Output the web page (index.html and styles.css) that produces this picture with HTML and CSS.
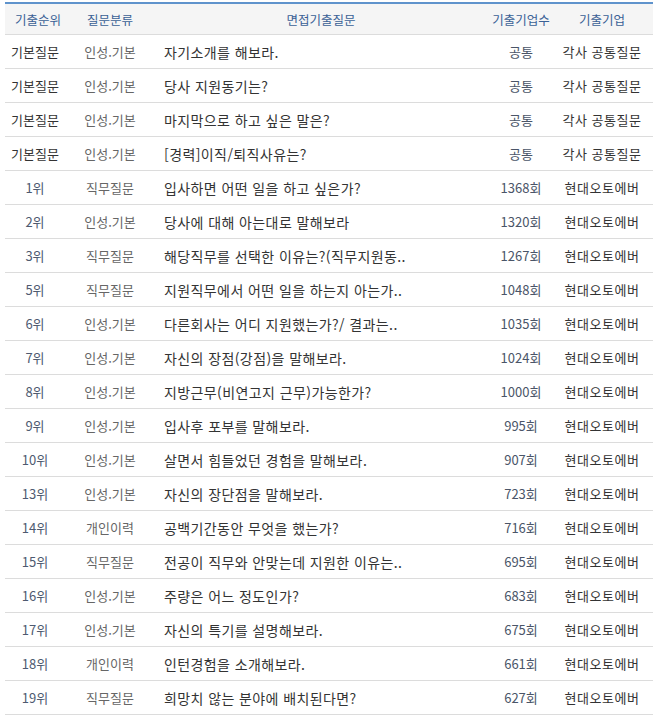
FILE: index.html
```html
<!DOCTYPE html>
<html lang="ko">
<head>
<meta charset="utf-8">
<link rel="stylesheet" href="styles.css">
</head>
<body>
<div class="wrap">
<table class="qtable">
<colgroup>
<col class="c-rank"><col class="c-cat"><col class="c-q"><col class="c-cnt"><col class="c-co">
</colgroup>
<thead>
<tr><th class="h-rank">기출순위</th><th>질문분류</th><th>면접기출질문</th><th>기출기업수</th><th class="co">기출기업</th></tr>
</thead>
<tbody>
<tr><td class="rank basic">기본질문</td><td class="cat">인성.기본</td><td class="q">자기소개를 해보라.</td><td class="cnt">공통</td><td class="co">각사 공통질문</td></tr>
<tr><td class="rank basic">기본질문</td><td class="cat">인성.기본</td><td class="q">당사 지원동기는?</td><td class="cnt">공통</td><td class="co">각사 공통질문</td></tr>
<tr><td class="rank basic">기본질문</td><td class="cat">인성.기본</td><td class="q">마지막으로 하고 싶은 말은?</td><td class="cnt">공통</td><td class="co">각사 공통질문</td></tr>
<tr><td class="rank basic">기본질문</td><td class="cat">인성.기본</td><td class="q">[경력]이직/퇴직사유는?</td><td class="cnt">공통</td><td class="co">각사 공통질문</td></tr>
<tr><td class="rank">1위</td><td class="cat">직무질문</td><td class="q">입사하면 어떤 일을 하고 싶은가?</td><td class="cnt">1368회</td><td class="co">현대오토에버</td></tr>
<tr><td class="rank">2위</td><td class="cat">인성.기본</td><td class="q">당사에 대해 아는대로 말해보라</td><td class="cnt">1320회</td><td class="co">현대오토에버</td></tr>
<tr><td class="rank">3위</td><td class="cat">직무질문</td><td class="q">해당직무를 선택한 이유는?(직무지원동..</td><td class="cnt">1267회</td><td class="co">현대오토에버</td></tr>
<tr><td class="rank">5위</td><td class="cat">직무질문</td><td class="q">지원직무에서 어떤 일을 하는지 아는가..</td><td class="cnt">1048회</td><td class="co">현대오토에버</td></tr>
<tr><td class="rank">6위</td><td class="cat">인성.기본</td><td class="q">다른회사는 어디 지원했는가?/ 결과는..</td><td class="cnt">1035회</td><td class="co">현대오토에버</td></tr>
<tr><td class="rank">7위</td><td class="cat">인성.기본</td><td class="q">자신의 장점(강점)을 말해보라.</td><td class="cnt">1024회</td><td class="co">현대오토에버</td></tr>
<tr><td class="rank">8위</td><td class="cat">인성.기본</td><td class="q">지방근무(비연고지 근무)가능한가?</td><td class="cnt">1000회</td><td class="co">현대오토에버</td></tr>
<tr><td class="rank">9위</td><td class="cat">인성.기본</td><td class="q">입사후 포부를 말해보라.</td><td class="cnt">995회</td><td class="co">현대오토에버</td></tr>
<tr><td class="rank">10위</td><td class="cat">인성.기본</td><td class="q">살면서 힘들었던 경험을 말해보라.</td><td class="cnt">907회</td><td class="co">현대오토에버</td></tr>
<tr><td class="rank">13위</td><td class="cat">인성.기본</td><td class="q">자신의 장단점을 말해보라.</td><td class="cnt">723회</td><td class="co">현대오토에버</td></tr>
<tr><td class="rank">14위</td><td class="cat">개인이력</td><td class="q">공백기간동안 무엇을 했는가?</td><td class="cnt">716회</td><td class="co">현대오토에버</td></tr>
<tr><td class="rank">15위</td><td class="cat">직무질문</td><td class="q">전공이 직무와 안맞는데 지원한 이유는..</td><td class="cnt">695회</td><td class="co">현대오토에버</td></tr>
<tr><td class="rank">16위</td><td class="cat">인성.기본</td><td class="q">주량은 어느 정도인가?</td><td class="cnt">683회</td><td class="co">현대오토에버</td></tr>
<tr><td class="rank">17위</td><td class="cat">인성.기본</td><td class="q">자신의 특기를 설명해보라.</td><td class="cnt">675회</td><td class="co">현대오토에버</td></tr>
<tr><td class="rank">18위</td><td class="cat">개인이력</td><td class="q">인턴경험을 소개해보라.</td><td class="cnt">661회</td><td class="co">현대오토에버</td></tr>
<tr><td class="rank">19위</td><td class="cat">직무질문</td><td class="q">희망치 않는 분야에 배치된다면?</td><td class="cnt">627회</td><td class="co">현대오토에버</td></tr>
</tbody>
</table>
</div>
</body>
</html>
```
FILE: styles.css
```css
html, body {
  margin: 0;
  padding: 0;
  background: #ffffff;
}
body {
  font-family: "Noto Sans CJK KR", "Noto Sans", sans-serif;
  font-size: 13px;
  color: #333;
}
.wrap {
  padding: 2px 0 0 5px;
  overflow: hidden;
}
.qtable {
  width: 648px;
  border-collapse: collapse;
  table-layout: fixed;
  border-top: 2px solid #5f93cc;
}
.c-rank { width: 60px; }
.c-cat { width: 90px; }
.c-q { width: 332px; }
.c-cnt { width: 68px; }
.c-co { width: 98px; }
.qtable th {
  height: 30px;
  padding: 0;
  background: #f5f5f5;
  color: #3a6196;
  font-size: 12.5px;
  font-weight: normal;
  text-align: center;
  border-bottom: 1px solid #dcdcdc;
  white-space: nowrap;
}
.qtable th.h-rank {
  padding-left: 6px;
}
.qtable td {
  height: 33px;
  padding: 0;
  border-bottom: 1px solid #dcdcdc;
  text-align: center;
  white-space: nowrap;
}
.qtable .co {
  padding-right: 4px;
}
.qtable td.rank {
  color: #4e5a70;
}
.qtable td.rank.basic {
  color: #333;
}
.qtable td.cat {
  color: #666;
}
.qtable td.q {
  text-align: left;
  padding-left: 9px;
  font-size: 14px;
  letter-spacing: 0.4px;
  color: #333;
}
.qtable td.cnt {
  color: #4a5568;
}
.qtable td.co {
  color: #333;
  letter-spacing: 0.5px;
}
```
